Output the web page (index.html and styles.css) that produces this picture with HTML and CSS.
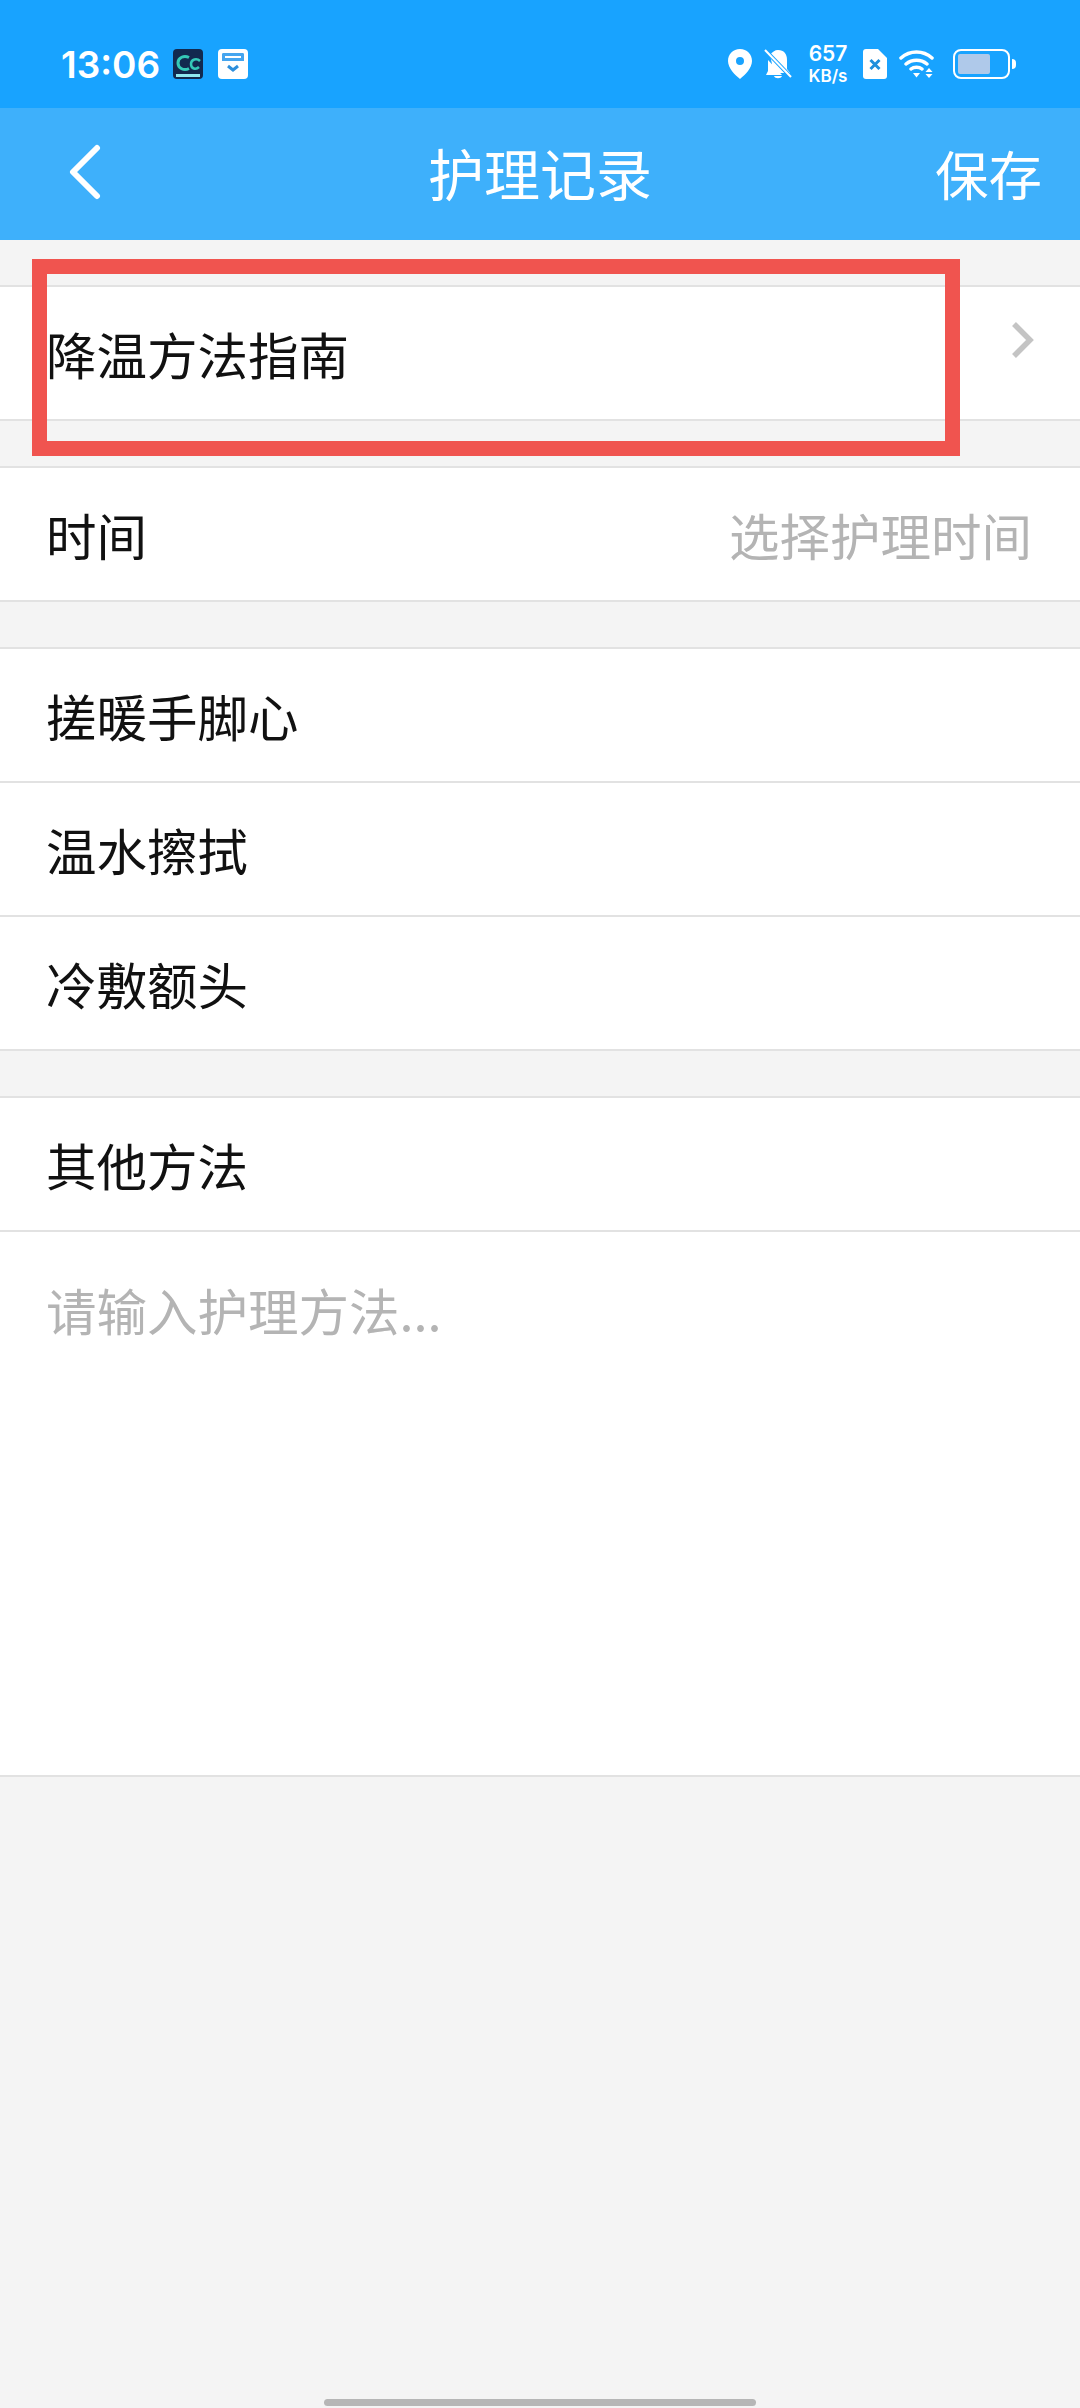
FILE: index.html
```html
<!DOCTYPE html>
<html lang="zh-CN">
<head>
    <meta charset="UTF-8">
    <meta name="viewport" content="width=device-width, initial-scale=1.0">
    <title>护理记录</title>
    <link rel="stylesheet" href="styles.css">
</head>
<body>
    <div class="status-bar">
        <div class="status-left">
            <span class="clock">13:06</span>
            <svg class="app-icon" viewBox="0 0 30 30">
                <rect width="30" height="30" rx="4" fill="#12294f"/>
                <path d="M16 8.500C11 6 5 8.500 5 14s6 8 11 5.500" fill="none" stroke="#35c9b8" stroke-width="3"/>
                <path d="M27 12c-3-3-9-2-9 3s5 6 8 3" fill="none" stroke="#35c9b8" stroke-width="2.500"/>
                <rect x="3" y="25" width="24" height="3" fill="#8fe8f0"/>
            </svg>
            <svg class="app-icon" viewBox="0 0 30 30">
                <rect width="30" height="30" rx="4" fill="#fff"/>
                <path d="M4 10V5.500C4 4.500 4.500 4 5.500 4h19c1 0 1.500.5 1.500 1.500V10h-3V7H7v3z" fill="#45a5ef"/>
                <rect x="4" y="9" width="22" height="3" fill="#45a5ef"/>
                <path d="M10 17l5 4 5-4" fill="none" stroke="#2d8fdc" stroke-width="3"/>
            </svg>
        </div>
        <div class="status-right">
            <svg class="pin" viewBox="0 0 24 30">
                <path fill-rule="evenodd" d="M12 0C5 0 0 5 0 12c0 7 7 14 12 18 5-4 12-11 12-18C24 5 19 0 12 0zm0 8a4 4 0 110 8 4 4 0 010-8z" fill="#fff"/>
            </svg>
            <svg class="bell" viewBox="0 0 28 30">
                <path d="M14 1c6 0 9 4 9 10v9l3 4H10L6 6c2-3 5-5 8-5zM4 11l14 15H2l2-4zM10 27h8c-1 3-7 3-8 0z" fill="#fff"/>
                <path d="M1 1l26 27" stroke="#18a3ff" stroke-width="4"/>
                <path d="M1 1l26 27" stroke="#fff" stroke-width="2"/>
            </svg>
            <div class="net-speed"><span>657</span><span>KB/s</span></div>
            <svg class="sim" viewBox="0 0 24 30">
                <path d="M3 0h12l9 9v18c0 2-1 3-3 3H3c-2 0-3-1-3-3V3c0-2 1-3 3-3z" fill="#fff"/>
                <path d="M7.500 11l9 9M16.500 11l-9 9" stroke="#1f8fdc" stroke-width="3"/>
            </svg>
            <svg class="wifi" viewBox="0 0 38 30">
                <path d="M2 9c9-8 22-8 31 0M7 15c6-5 15-5 21 0M12 20c3-2.500 8-2.500 11 0" fill="none" stroke="#fff" stroke-width="3.500" stroke-linecap="round"/>
                <path d="M14 24h7l-3.500 4.500zM30 19l3.500 4h-7zM26.500 25h7L30 29z" fill="#fff"/>
            </svg>
            <div class="battery">
                <div class="battery-body"><div class="battery-level"></div></div>
                <div class="battery-tip"></div>
            </div>
        </div>
    </div>

    <header class="nav-bar">
        <svg class="back" viewBox="0 0 34 56">
            <path d="M29 4L5 28l24 24" fill="none" stroke="#fff" stroke-width="6" stroke-linecap="round" stroke-linejoin="round"/>
        </svg>
        <h1>护理记录</h1>
        <span class="save">保存</span>
    </header>

    <main class="content">
        <section class="group">
            <div class="row">
                <span>降温方法指南</span>
                <svg class="arrow" viewBox="0 0 24 38">
                    <path d="M3 3l16 16L3 35" fill="none" stroke="#c4c4c4" stroke-width="5.500"/>
                </svg>
            </div>
        </section>

        <section class="group">
            <div class="row">
                <span>时间</span>
                <span class="placeholder">选择护理时间</span>
            </div>
        </section>

        <section class="group">
            <div class="row">搓暖手脚心</div>
            <div class="row">温水擦拭</div>
            <div class="row">冷敷额头</div>
        </section>

        <section class="group">
            <div class="row">其他方法</div>
            <div class="note placeholder">请输入护理方法...</div>
        </section>
    </main>

    <div class="highlight"></div>
    <div class="home-bar"></div>
</body>
</html>
```

FILE: styles.css
```css
body {
    margin: 0;
    width: 1080px;
    height: 2408px;
    overflow: hidden;
    background-color: #f4f4f4;
    color: #111;
    font-family: "Noto Sans CJK SC", "Noto Sans", sans-serif;
    position: relative;
}

.status-bar {
    height: 108px;
    box-sizing: border-box;
    padding: 20px 64px 0 61px;
    display: flex;
    align-items: center;
    justify-content: space-between;
    background-color: #18a3ff;
}

.status-left,
.status-right {
    display: flex;
    align-items: center;
}

.status-right {
    color: #fff;
}

.clock {
    color: #fff;
    font-family: Inter, "Noto Sans", sans-serif;
    font-size: 37px;
    font-weight: 600;
    width: 112px;
}

.app-icon {
    width: 30px;
    height: 30px;
    margin-right: 15px;
}

.pin {
    width: 24px;
    height: 30px;
    margin-right: 12px;
}

.bell {
    width: 28px;
    height: 30px;
    margin-right: 14px;
}

.net-speed {
    display: flex;
    flex-direction: column;
    align-items: center;
    width: 44px;
    margin-right: 13px;
    margin-bottom: 2px;
    font-family: Inter, "Noto Sans", sans-serif;
    font-weight: 600;
}

.net-speed span:first-child {
    font-size: 21px;
}

.net-speed span:last-child {
    font-size: 17px;
}

.sim {
    width: 24px;
    height: 30px;
    margin-right: 12px;
}

.wifi {
    width: 38px;
    height: 30px;
    margin-right: 16px;
}

.battery {
    display: flex;
    align-items: center;
}

.battery-body {
    width: 57px;
    height: 30px;
    box-sizing: border-box;
    padding: 3px;
    border: 2px solid #fff;
    border-radius: 8px;
}

.battery-level {
    width: 32px;
    height: 100%;
    background-color: #afc9ea;
    border-radius: 2px;
}

.battery-tip {
    width: 4px;
    height: 10px;
    margin-left: 2px;
    background-color: #fff;
    border-radius: 0 4px 4px 0;
}

.nav-bar {
    height: 132px;
    box-sizing: border-box;
    padding: 0 38px 0 68px;
    display: flex;
    align-items: center;
    justify-content: space-between;
    background-color: #3eb0fb;
    color: #fff;
    position: relative;
}

.back {
    width: 34px;
    height: 56px;
    margin-top: -4px;
}

.nav-bar h1 {
    margin: 0;
    position: absolute;
    left: 400px;
    width: 280px;
    top: 23px;
    text-align: center;
    font-size: 56px;
    font-weight: 400;
}

.save {
    font-size: 53.500px;
    margin-top: -4px;
}

.content {
    padding-top: 45px;
    display: flex;
    flex-direction: column;
    gap: 45px;
}

.group {
    background-color: #fff;
    border-top: 2px solid #e2e2e2;
    border-bottom: 2px solid #e2e2e2;
}

.row {
    height: 132px;
    box-sizing: border-box;
    padding: 0 48px 0 46px;
    display: flex;
    align-items: center;
    justify-content: space-between;
    font-size: 50.500px;
}

.row + .row {
    height: 134px;
    border-top: 2px solid #e2e2e2;
}

.arrow {
    width: 24px;
    height: 38px;
    margin-right: -3px;
    margin-top: -27px;
}

.placeholder {
    color: #b4b4b4;
}

.note {
    height: 545px;
    box-sizing: border-box;
    padding: 40px 46px 0;
    border-top: 2px solid #e2e2e2;
    font-size: 50.500px;
}

.highlight {
    position: absolute;
    left: 32px;
    top: 259px;
    width: 928px;
    height: 197px;
    box-sizing: border-box;
    border: 15px solid #f0544f;
}

.home-bar {
    position: absolute;
    left: 324px;
    bottom: 2px;
    width: 432px;
    height: 7px;
    background-color: #b6b6b6;
    border-radius: 4px;
}
```
